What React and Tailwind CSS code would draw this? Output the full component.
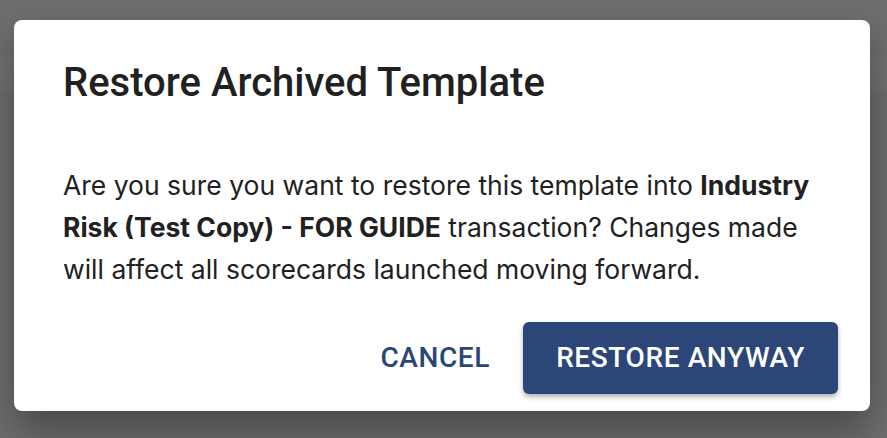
export default function App() {
  return (
    <div className="relative w-[887px] h-[438px] overflow-hidden bg-[#6e6e6e]">
      <div className="absolute inset-x-0 top-[56px] h-[34px] bg-[#727272]" />
      <div className="relative pt-[20px] pl-[14px]">
        <div className="w-[856px] h-[391px] bg-white rounded-[8px] shadow-[0_20px_40px_rgba(0,0,0,0.35)] flex flex-col">
          <h2
            className="pl-[49px] pt-[39px] text-[40px] leading-[48px] font-medium text-[#212121]"
            style={{ fontFamily: 'Roboto, sans-serif' }}
          >
            Restore Archived Template
          </h2>
          <p
            className="ml-[49px] w-[775px] mt-[57px] text-[26.5px] leading-[42px] text-[#212121]"
            style={{ fontFamily: 'Inter, sans-serif' }}
          >
            Are you sure you want to restore this template into <b className="font-bold">Industry Risk (Test Copy) - FOR GUIDE</b> transaction? Changes made will affect all scorecards launched moving forward.
          </p>
          <div className="mt-auto flex justify-end items-center gap-[33px] pr-[32px] pb-[17px]" style={{ fontFamily: 'Roboto, sans-serif' }}>
            <button className="text-[28px] font-medium tracking-[0.6px] text-[#2b4677] uppercase">Cancel</button>
            <button className="w-[315px] h-[72px] rounded-[6px] bg-[#2b4677] text-white text-[28px] font-medium tracking-[0.6px] uppercase shadow-[0_3px_5px_rgba(0,0,0,0.3)]">
              Restore Anyway
            </button>
          </div>
        </div>
      </div>
    </div>
  );
}
